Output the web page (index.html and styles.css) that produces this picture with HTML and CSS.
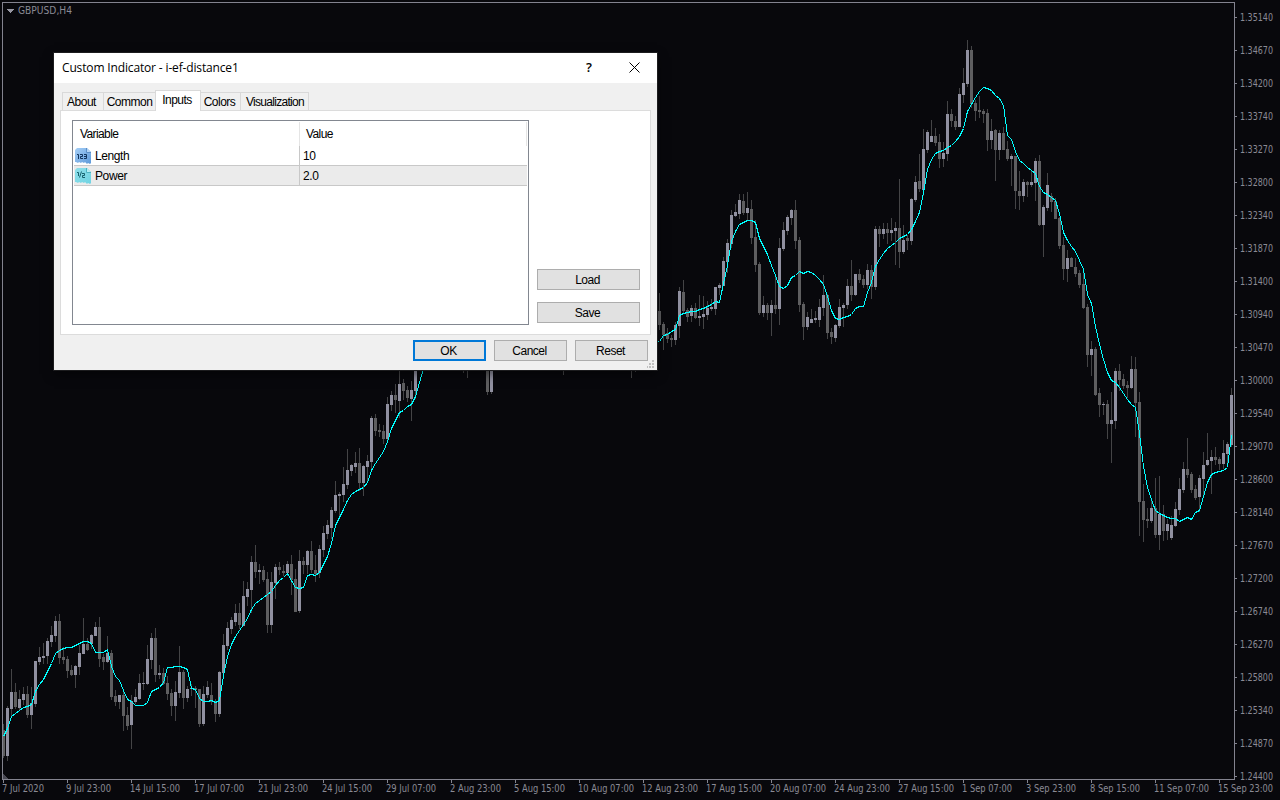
FILE: index.html
```
<!DOCTYPE html>
<html lang="en">
<head>
    <meta charset="UTF-8">
    <meta name="viewport" content="width=device-width, initial-scale=1.0">
    <title>GBPUSD,H4</title>
    <link rel="stylesheet" href="styles.css">
</head>
<body>
    <svg class="chart" id="chart" width="1280" height="800">
        <rect class="frame" x="2.5" y="2.5" width="1232" height="777"></rect>
        <path class="mark" d="M6 9h8l-4 4z"></path>
        <path class="corner" d="M3 774v5h5z"></path>
        <text class="label" x="18" y="14" textLength="54" lengthAdjust="spacingAndGlyphs">GBPUSD,H4</text>
        <g id="axis"></g>
        <g id="candles"></g>
        <g id="lines"></g>
    </svg>

    <div class="dialog">
        <div class="title">
            <span class="title-text">Custom Indicator - i-ef-distance1</span>
            <span class="help">?</span>
            <svg class="close" width="11" height="11"><path d="M.5 .5l10 10M10.5 .5l-10 10"></path></svg>
        </div>
        <ul class="tabs">
            <li class="about">About</li>
            <li class="common">Common</li>
            <li class="current">Inputs</li>
            <li class="colors">Colors</li>
            <li class="visual">Visualization</li>
        </ul>
        <div class="pane">
            <div class="list">
                <div class="row head">
                    <span class="name">Variable</span>
                    <span class="value">Value</span>
                </div>
                <div class="row">
                    <span class="name">
                        <svg class="icon" width="16" height="16">
                            <linearGradient id="blue" x2="1" y2="1">
                                <stop offset="0" stop-color="#a6cff7"></stop>
                                <stop offset="1" stop-color="#5c98d8"></stop>
                            </linearGradient>
                            <path fill="url(#blue)" d="M0 2l2-2h10l4 4v11l-1 1-2-1-1 1-2-2-1 1-2-1-1 1-2-1-1 1-2-1-1 0z"></path>
                            <path fill="#b5d6f7" stroke="#5d8fc6" d="M11.500 0v4.500h4.500"></path>
                            <path class="dark" d="M2 6.500h1.500v4.500M5 6.500h2.500v2h-2v2h2.500M9 6.500h2.500v4h-2.500M9 8.500h2"></path>
                        </svg>
                        Length
                    </span>
                    <span class="value">10</span>
                </div>
                <div class="row selected">
                    <span class="name">
                        <svg class="icon" width="16" height="16">
                            <linearGradient id="cyan" x2="1" y2="1">
                                <stop offset="0" stop-color="#8edfea"></stop>
                                <stop offset="1" stop-color="#6fd3e2"></stop>
                            </linearGradient>
                            <path fill="url(#cyan)" d="M0 2l2-2h10l4 4v11l-1 1-2-1-1 1-2-2-1 1-2-1-1 1-2-1-1 1-2-1-1 0z"></path>
                            <path fill="#b8eef4" stroke="#4db3c2" d="M11.500 0v4.500h4.500"></path>
                            <path class="teal" d="M2 4.500h1.500v3.500M6.500 3.500l-2 6M7 5.500h2.500v2h-2v2h2.500"></path>
                        </svg>
                        Power
                    </span>
                    <span class="value">2.0</span>
                </div>
            </div>
            <div class="side">
                <button>Load</button>
                <button>Save</button>
            </div>
        </div>
        <div class="footer">
            <button class="ok">OK</button>
            <button>Cancel</button>
            <button>Reset</button>
        </div>
        <svg class="grip" width="7" height="8"><path d="M5 0h2v2h-2zM2 3h2v2h-2zM5 3h2v2h-2zM0 6h1v2h-1zM2 6h2v2h-2zM5 6h2v2h-2z"></path></svg>
    </div>
    <script src="chart.js"></script>
</body>
</html>
```
FILE: styles.css
```
*{
    margin:0;
    padding:0;
    list-style:none;
    box-sizing: border-box;
}
body{
    width: 1280px;
    height: 800px;
    overflow: hidden;
    position: relative;
    background-color: #08080c;
    font-family: "Liberation Sans", sans-serif;
    font-size: 12px;
    color: #000;
}
/* chart */
.chart{
    display: block;
    shape-rendering: crispEdges;
}
.frame{
    fill: none;
    stroke: #83838f;
}
.mark{
    fill: #9797a3;
}
.corner{
    fill: #484852;
}
.label{
    font-family: "DejaVu Sans Condensed", "DejaVu Sans", sans-serif;
    font-size: 10px;
    fill: #8a8a94;
}
.tick{
    fill: #83838f;
}
.wick{
    fill: #444446;
}
.up{
    fill: #9090a0;
}
.down{
    fill: #5e5e60;
}
.average{
    fill: none;
    stroke: #00ffff;
}
/* dialog */
.dialog{
    position: absolute;
    left:54px;
    top:53px;
    width: 603px;
    height: 317px;
    background-color: #f0f0f0;
    box-shadow: 0 0 0 1px #1c1c1e, 0 4px 10px rgba(0,0,0,0.5);
}
.title{
    height: 30px;
    padding: 0 18px 2px 8px;
    display: flex;
    align-items: center;
    background-color: #fff;
    font-family: "Open Sans", sans-serif;
}
.title-text{
    flex: 1;
    letter-spacing: -0.15px;
}
.help{
    width: 8px;
    margin-right: 35px;
    font-size: 13px;
    font-weight: 600;
}
.close{
    margin-right: -1px;
}
.close path{
    fill: none;
    stroke: #000;
    shape-rendering: auto;
}
.tabs{
    height: 27px;
    padding-left: 8px;
    display: flex;
    align-items: flex-end;
    letter-spacing: -0.5px;
}
.tabs li{
    height: 18px;
    padding-right: 2px;
    border: 1px solid #d9d9d9;
    border-width: 1px 1px 0 0;
    line-height: 19px;
    text-align: center;
    white-space: nowrap;
}
.tabs .about{
    width: 42px;
    padding-right: 3px;
    border-left-width: 1px;
}
.tabs .common{
    width: 51px;
    padding-right: 0;
    border-right: 0;
}
.tabs .current{
    width: 46px;
    height: 21px;
    margin-bottom: -1px;
    border-left-width: 1px;
    line-height: 19px;
    background-color: #fff;
    position: relative;
    z-index: 1;
}
.tabs .colors{
    width: 40px;
}
.tabs .visual{
    width: 68px;
    padding-right: 0;
    letter-spacing: -0.7px;
}
.visual{
    text-indent: 1px;
}
.pane{
    width: 591px;
    height: 225px;
    margin-left: 6px;
    padding: 9px 10px 9px 11px;
    border: 1px solid #dcdcdc;
    background-color: #fff;
    display: flex;
}
.list{
    width: 457px;
    height: 205px;
    border: 1px solid #828790;
    padding: 1px;
    letter-spacing: -0.4px;
}
.row{
    width: 453px;
    height: 20px;
    display: flex;
    border-bottom: 1px solid #c8c8c8;
}
.name{
    width: 226px;
    padding-left: 1px;
    border-right: 1px solid #c8c8c8;
    display: flex;
    align-items: center;
}
.value{
    padding-left: 3px;
    display: flex;
    align-items: center;
}
.head{
    height: 24px;
    border-bottom: 0;
    border-right: 1px solid #e5e5e5;
    letter-spacing: -0.6px;
}
.head .name{
    padding-left: 6px;
    border-color: #e5e5e5;
}
.head .value{
    padding-left: 6px;
}
.selected{
    background-color: #ebebeb;
}
.icon{
    margin-right: 4px;
    fill: none;
}
.dark{
    stroke: #12355f;
}
.teal{
    stroke: #17626f;
}
.side{
    width: 103px;
    margin-left: 8px;
    padding-bottom: 2px;
    display: flex;
    flex-direction: column;
    justify-content: flex-end;
    gap: 12px;
}
button{
    height: 21px;
    padding-right: 2px;
    border: 1px solid #adadad;
    background-color: #e1e1e1;
    font: 12px "Liberation Sans", sans-serif;
    letter-spacing: -0.5px;
    color: #000;
}
.footer{
    padding: 5px 9px 0 0;
    display: flex;
    justify-content: flex-end;
    gap: 8px;
}
.footer button{
    width: 73px;
}
.footer .ok{
    border: 2px solid #0078d7;
}
.grip{
    position: absolute;
    right: 3px;
    bottom: 2px;
    fill: #bfbfbf;
}
```
FILE: chart.js
```
// one bar: high, body top, body bottom, low, 1 = up / 0 = down, average
var left = [
    [724,730,756,758,0,736],[706,708,756,761,1,728],[669,692,709,716,1,716],[683,692,707,709,0,713],
    [690,699,708,710,1,710],[687,694,700,705,1,707],[686,694,715,718,0,706],[687,703,715,729,1,704],
    [661,661,704,707,1,691],[647,657,662,665,1,684],[643,656,658,664,1,679],[638,641,656,664,1,671],
    [626,635,642,647,1,663],[616,621,636,642,1,653],[614,621,658,664,0,650],[647,657,660,664,0,648],
    [656,659,671,678,0,647],[665,670,675,676,0,647],[665,666,675,688,1,645],[645,653,667,675,1,643],
    [618,644,654,654,1,641],[638,644,650,651,0,641],[634,635,644,649,1,643],[622,627,636,636,1,652],
    [617,627,659,667,0,652],[654,657,662,670,0,652],[636,653,662,663,1,649],[650,653,697,700,0,666],
    [690,696,702,706,0,676],[695,695,702,709,1,680],[692,695,716,731,0,690],[707,715,726,730,0,699],
    [695,701,725,749,1,701],[689,697,702,704,1,705],[674,683,699,700,1,705],[672,683,684,690,1,705],
    [645,659,684,685,1,702],[633,638,660,669,1,691],[628,638,675,682,0,689],[665,673,675,679,1,687],
    [668,673,684,685,0,682],[676,683,694,700,0,667],[689,693,706,716,0,667],[681,692,706,721,1,666],
    [646,672,693,698,1,666],[670,672,698,709,0,667],[686,689,698,702,1,669],[684,688,689,696,1,688],
    [686,688,690,708,0,689],[689,689,724,727,0,698],[686,694,724,726,1,701],[681,687,695,698,1,701],
    [683,695,702,705,0,700],[699,701,714,722,0,702],[671,672,714,717,1,700],[634,645,673,674,1,675],
    [622,628,646,650,1,656],[617,620,629,634,1,644],[604,613,622,626,1,636],[603,613,625,629,0,630],
    [581,596,626,626,1,624],[582,589,597,606,1,618],[556,562,590,613,1,609],[545,562,572,578,0,603],
    [564,570,572,584,1,600],[566,570,580,582,0,597],[572,579,625,633,0,594],[572,582,625,633,1,591],
    [564,567,583,599,1,585],[562,567,570,575,0,580],[565,571,573,576,0,577],[561,564,573,576,1,573],
    [555,564,580,595,0,580],[569,579,612,612,0,587],[550,561,611,613,1,588],[557,561,565,574,0,587],
    [550,551,565,574,1,575],[541,551,570,573,0,574],[555,570,574,582,0,575],[545,549,573,578,1,572],
    [526,533,550,557,1,564],[520,525,534,539,1,556],[507,510,528,539,1,543],[481,495,511,513,1,525],
    [492,494,496,518,1,517],[467,484,495,502,1,509],[449,470,485,489,1,500],[464,465,471,476,1,494],
    [452,463,467,473,1,491],[448,463,483,491,0,489],[465,466,483,496,1,487],[455,461,467,482,1,482],
    [416,418,462,471,1,470],[414,418,431,436,0,463],[424,430,432,437,0,457],[425,431,439,444,0,451],
    [397,404,439,442,1,441],[391,395,405,411,1,428],[384,395,400,413,0,420],[371,384,401,418,1,412],
    [379,383,391,400,0,410],[386,390,398,402,0,406],[381,390,399,421,1,404],[355,360,391,399,1,396],
    [345,350,362,366,1,382],[340,346,355,360,1,368],[335,340,350,358,1,354]
];
var right = [
    [293,311,325,330,0,341],[322,324,335,350,0,335],[328,333,339,343,0,334],[335,338,340,347,0,331],
    [322,325,340,345,1,329],[287,291,326,338,1,315],[280,292,311,314,0,313],[308,310,317,322,0,312],
    [305,308,316,322,1,311],[303,308,318,319,0,311],[295,316,318,326,1,309],[296,314,317,329,1,308],
    [301,308,315,320,1,306],[299,307,309,311,1,304],[287,287,309,315,1,301],[283,285,288,295,1,302],
    [257,261,286,286,1,283],[239,243,262,273,1,265],[210,215,244,248,1,241],[204,212,216,217,1,231],
    [194,200,214,219,1,224],[194,201,213,215,0,222],[192,208,213,220,1,220],[200,209,238,244,0,220],
    [220,237,265,272,0,222],[262,264,313,315,0,238],[296,305,313,317,1,246],[303,305,313,320,0,254],
    [300,305,313,336,1,265],[276,305,309,314,0,275],[238,248,309,325,1,286],[222,230,249,251,1,288],
    [215,217,231,235,1,285],[209,210,218,225,1,277],[200,210,241,249,0,275],[237,240,305,312,0,271],
    [302,304,327,340,0,273],[312,317,327,330,1,271],[309,319,323,323,1,272],[311,318,320,323,1,275],
    [299,307,320,327,1,279],[275,295,308,316,1,284],[294,295,333,339,0,296],[328,332,337,344,0,310],
    [324,325,338,342,1,318],[299,307,326,328,1,319],[303,305,308,327,1,317],[279,286,305,309,1,316],
    [260,286,295,301,0,314],[274,274,295,296,1,308],[269,274,280,283,0,306],[275,279,285,288,0,306],
    [264,270,285,289,1,292],[265,270,287,299,0,282],[226,229,287,290,1,266],[226,229,234,247,0,259],
    [223,229,234,239,1,253],[223,229,233,244,0,248],[218,230,233,241,1,245],[222,228,231,265,1,242],
    [179,228,252,268,0,238],[225,240,252,254,1,236],[235,238,241,250,0,234],[198,199,241,245,1,229],
    [176,182,200,202,1,221],[154,181,189,192,0,212],[129,149,190,196,1,192],[130,132,150,153,1,169],
    [120,136,142,142,1,159],[128,136,143,146,0,153],[134,142,159,168,0,151],[142,153,159,167,1,150],
    [101,114,154,161,1,147],[109,114,121,127,0,145],[116,121,127,130,0,141],[88,94,127,127,1,136],
    [68,83,95,103,1,128],[40,50,84,87,1,111],[46,50,104,108,0,104],[100,103,111,121,0,97],
    [96,110,112,118,0,91],[109,111,114,123,0,87],[109,113,140,151,0,88],[119,131,140,149,1,90],
    [129,130,150,181,0,95],[130,133,150,160,1,98],[127,133,150,150,0,105],[141,149,159,161,0,135],
    [154,156,159,186,1,139],[156,156,191,209,0,151],[171,191,196,210,0,160],[179,182,196,202,1,163],
    [181,182,185,197,0,167],[170,182,185,187,1,170],[158,161,183,201,1,173],[155,161,225,226,0,186],
    [205,207,225,257,1,192],[173,185,208,211,1,194],[193,196,202,212,0,197],[198,201,219,219,0,200],
    [217,218,246,249,0,213],[237,245,269,280,0,232],[250,258,269,282,1,240],[257,258,267,267,0,246],
    [258,267,274,277,0,251],[270,273,285,288,0,260],[268,284,308,309,0,269],[304,307,355,367,0,294],
    [341,349,355,376,1,303],[347,349,395,396,0,326],[388,393,405,417,0,344],[402,404,405,415,1,359],
    [400,404,424,439,0,372],[392,420,424,463,1,380],[368,371,421,429,1,382],[364,371,380,391,0,387],
    [374,379,386,389,0,393],[381,385,388,398,0,399],[356,369,388,389,1,404],[357,369,403,437,0,407],
    [392,402,502,536,0,433],[484,501,520,542,0,466],[508,519,521,528,0,487],[500,508,521,523,1,499],
    [478,508,535,538,0,510],[476,514,535,550,1,513],[505,514,531,541,0,515],[519,524,531,540,1,517],
    [516,525,538,540,1,518],[502,509,526,527,1,518],[478,489,510,515,1,521],[462,469,490,493,1,519],
    [438,469,475,478,0,517],[472,474,490,493,0,519],[485,489,498,500,0,512],[475,478,497,512,1,510],
    [452,465,479,496,1,496],[433,460,465,466,1,482],[450,457,461,494,1,474],[447,457,460,465,0,472],
    [457,459,464,470,0,471],[440,453,464,469,1,470],[442,444,454,466,1,467],[388,395,445,447,1,435]
];
// lows that reach below the dialog
var middle = [
    [463,360,362,366,373,0],[467,360,364,368,378,1],[487,350,356,392,395,0],[491,350,356,392,394,1],
    [563,350,356,366,375,0],[631,350,356,366,378,0],[635,350,356,366,372,1]
];
var prices = ['1.35140','1.34670','1.34200','1.33740','1.33270','1.32800','1.32340','1.31870',
    '1.31400','1.30940','1.30470','1.30000','1.29540','1.29070','1.28600','1.28140','1.27670',
    '1.27200','1.26740','1.26270','1.25800','1.25340','1.24870','1.24400'];
var dates = ['7 Jul 2020','9 Jul 23:00','14 Jul 15:00','17 Jul 07:00','21 Jul 23:00','24 Jul 15:00',
    '29 Jul 07:00','2 Aug 23:00','5 Aug 15:00','10 Aug 07:00','12 Aug 23:00','17 Aug 15:00',
    '20 Aug 07:00','24 Aug 23:00','27 Aug 15:00','1 Sep 07:00','3 Sep 23:00','8 Sep 15:00',
    '11 Sep 07:00','15 Sep 23:00'];

var axis = document.getElementById('axis');
var candles = document.getElementById('candles');
var lines = document.getElementById('lines');

function add(parent, name, attrs, text){
    var el = document.createElementNS('http://www.w3.org/2000/svg', name);
    for(var key in attrs){
        el.setAttribute(key, attrs[key]);
    }
    if(text){
        el.textContent = text;
    }
    parent.appendChild(el);
}

function rect(parent, cls, x, y, w, h){
    add(parent, 'rect', {'class':cls, x:x, y:y, width:w, height:h});
}

function label(x, y, width, text){
    add(axis, 'text', {'class':'label', x:x, y:y, textLength:width, lengthAdjust:'spacingAndGlyphs'}, text);
}

function candle(x, high, top, bottom, low, up){
    rect(candles, 'wick', x, high, 1, low-high);
    // first bar is cut by the frame
    var start = Math.max(x-1, 3);
    rect(candles, up ? 'up' : 'down', start, top, x+2-start, bottom-top);
}

function series(data, x, points){
    for(var i=0; i<data.length; i++){
        var d = data[i];
        candle(x+i*4, d[0], d[1], d[2], d[3], d[4]);
        points.push((x+i*4+0.5)+','+(d[5]+0.5));
    }
    add(lines, 'polyline', {'class':'average', points:points.join(' ')});
}

for(var i=0; i<prices.length; i++){
    rect(axis, 'tick', 1235, 17+i*33, 2, 1);
    label(1240, 21+i*33, 33, prices[i]);
}
for(var i=0; i<dates.length; i++){
    var wide = dates[i].length==12;
    var width = wide ? 50 : 45;
    if(i==0){
        width = 42;
    }
    if(i>6){
        width = wide ? 56 : 51;
    }
    if(i>14){
        width = wide ? 55 : 50;
    }
    rect(axis, 'tick', 3+i*64, 780, 1, 3);
    label(2+i*64, 792, width, dates[i]);
}
for(var i=0; i<middle.length; i++){
    candle.apply(null, middle[i]);
}
series(left, 3, []);
series(right, 659, ['656,343']);
```
